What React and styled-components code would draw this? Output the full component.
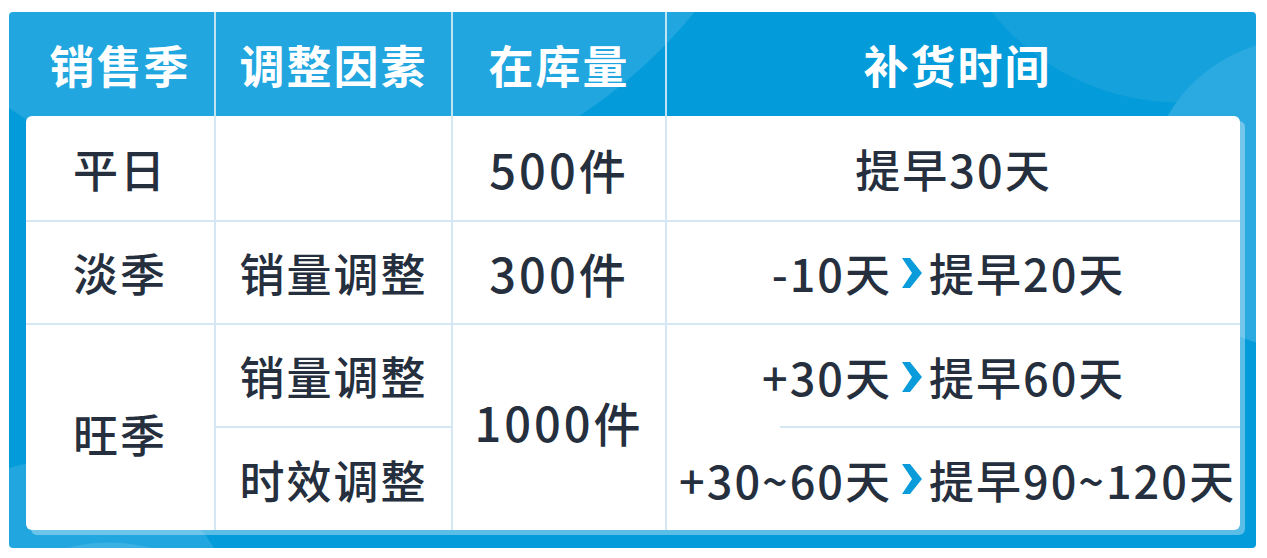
import React from 'react'
import styled, { createGlobalStyle } from 'styled-components'

const GlobalStyle = createGlobalStyle`
  html, body {
    margin: 0;
    padding: 0;
    background: #fff;
  }
  body {
    font-family: "Noto Sans CJK SC", "Noto Sans", sans-serif;
  }
`

const Page = styled.div`
  width: 1267px;
  height: 558px;
  box-sizing: border-box;
  padding: 12px 11px 10px 9px;
`

const Panel = styled.div`
  height: 536px;
  border-radius: 4px;
  display: flex;
  flex-direction: column;
  background:
    radial-gradient(circle 510px at 291px -322px, #21a6df 99.7%, transparent 100%),
    radial-gradient(circle 156px at 1293px 182px, #2aaae0 99.3%, transparent 100%),
    radial-gradient(circle 242px at 1171px -151px, #15a1db 99.5%, transparent 100%),
    radial-gradient(circle 170px at 100px 700px, #3ab0e3 99.3%, transparent 100%),
    radial-gradient(circle 180px at 51px 628px, #21a6df 99.3%, transparent 100%),
    #039bd9;
`

const Header = styled.div`
  display: grid;
  grid-template-columns: 190px 237px 214px 1fr;
  height: 104px;
  padding: 0 8px 0 17px;
`

const HeadCell = styled.div`
  display: flex;
  align-items: center;
  justify-content: center;
  color: #fff;
  font-size: 45px;
  font-weight: 700;
  letter-spacing: 2px;
  border-right: ${p => (p.$last ? 'none' : '2px solid rgba(220, 238, 246, 0.85)')};
`

const Card = styled.div`
  margin: 0 16px 0 17px;
  background: #fff;
  border-radius: 6px;
  box-shadow: 5px 5px 0 rgba(255, 255, 255, 0.35);
  display: grid;
  grid-template-columns: 190px 237px 214px 1fr;
  grid-template-rows: 106px 103px 103px 102px;
`

const line = '#d5e7f2'

const Cell = styled.div`
  display: flex;
  align-items: center;
  justify-content: center;
  box-sizing: border-box;
  color: #252f3e;
  font-size: ${p => (p.$big ? 47 : 45)}px;
  font-weight: 500;
  letter-spacing: ${p => (p.$big ? 3 : 2)}px;
  padding: ${p => p.$pad || '0'};
  grid-row: span ${p => p.$rows || 1};
  border-right: ${p => (p.$noRight ? 'none' : `2px solid ${line}`)};
  border-bottom: ${p => (p.$noBottom ? 'none' : `2px solid ${line}`)};
  background: ${p =>
    p.$shortLine
      ? `linear-gradient(${line}, ${line}) no-repeat right bottom / calc(100% - 113px) 2px`
      : 'transparent'};
`

const Split = styled.div`
  width: 100%;
  display: grid;
  grid-template-columns: 223px auto 1fr;
  align-items: center;
`

const Before = styled.span`
  justify-self: end;
  margin-right: -2px;
`

const After = styled.span`
  justify-self: start;
`

const Arrow = styled.svg`
  width: 20px;
  height: 30px;
  margin: 0 7px 0 12px;
  fill: #0a9cda;
`

const Chevron = () => (
  <Arrow viewBox="0 0 20 30">
    <polygon points="0,0 8,0 20,15 8,30 0,30 10,15" />
  </Arrow>
)

const Change = ({ from, to }) => (
  <Split>
    <Before>{from}</Before>
    <Chevron />
    <After>{to}</After>
  </Split>
)

export default function App() {
  return (
    <Page>
      <GlobalStyle />
      <Panel>
        <Header>
          <HeadCell>销售季</HeadCell>
          <HeadCell>调整因素</HeadCell>
          <HeadCell>在库量</HeadCell>
          <HeadCell $last>补货时间</HeadCell>
        </Header>
        <Card>
          <Cell>平日</Cell>
          <Cell />
          <Cell $big>500件</Cell>
          <Cell $noRight>提早30天</Cell>

          <Cell>淡季</Cell>
          <Cell>销量调整</Cell>
          <Cell $big>300件</Cell>
          <Cell $noRight>
            <Change from="-10天" to="提早20天" />
          </Cell>

          <Cell $rows={2} $noBottom $pad="12px 0 0">旺季</Cell>
          <Cell>销量调整</Cell>
          <Cell $rows={2} $noBottom $big $pad="0 0 12px">1000件</Cell>
          <Cell $noRight $noBottom $shortLine>
            <Change from="+30天" to="提早60天" />
          </Cell>

          <Cell $noBottom>时效调整</Cell>
          <Cell $noRight $noBottom>
            <Change from="+30~60天" to="提早90~120天" />
          </Cell>
        </Card>
      </Panel>
    </Page>
  )
}
